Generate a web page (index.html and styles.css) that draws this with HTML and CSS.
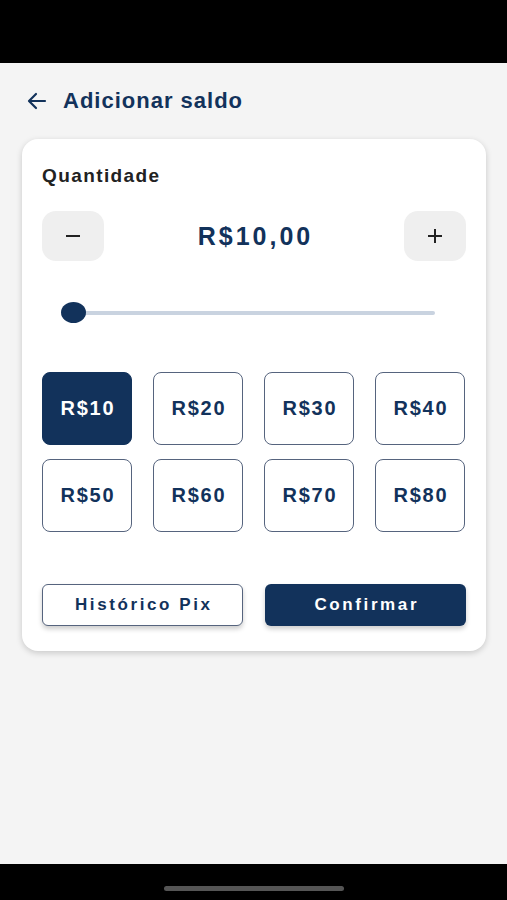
FILE: index.html
```html
<!DOCTYPE html>
<html>
<head>
<meta charset="utf-8">
<title>Adicionar saldo</title>
<link rel="stylesheet" href="styles.css">
</head>
<body>
<div class="status-bar"></div>

<div class="screen">
  <div class="header">
    <svg class="back" width="24" height="24" viewBox="0 0 24 24">
      <path d="M20 12H5M11 5l-7 7 7 7" fill="none" stroke="#12325b" stroke-width="2.2" stroke-linecap="round" stroke-linejoin="round"/>
    </svg>
    <h1>Adicionar saldo</h1>
  </div>

  <div class="card">
    <h2>Quantidade</h2>

    <div class="stepper">
      <button class="step">
        <svg width="20" height="20" viewBox="0 0 20 20"><path d="M3 10h14" stroke="#222" stroke-width="2"/></svg>
      </button>
      <div class="amount">R$10,00</div>
      <button class="step">
        <svg width="20" height="20" viewBox="0 0 20 20"><path d="M3 10h14M10 3v14" stroke="#222" stroke-width="2"/></svg>
      </button>
    </div>

    <div class="slider">
      <div class="track"></div>
      <div class="thumb"></div>
    </div>

    <div class="values">
      <button class="value selected">R$10</button>
      <button class="value">R$20</button>
      <button class="value">R$30</button>
      <button class="value">R$40</button>
      <button class="value">R$50</button>
      <button class="value">R$60</button>
      <button class="value">R$70</button>
      <button class="value">R$80</button>
    </div>

    <div class="actions">
      <button class="btn outline">Histórico Pix</button>
      <button class="btn solid">Confirmar</button>
    </div>
  </div>
</div>

<div class="nav-bar"><div class="pill"></div></div>
</body>
</html>
```

FILE: styles.css
```css
html, body {
   margin: 0;
   padding: 0;
}

body {
   width: 507px;
   height: 900px;
   background-color: #f4f4f4;
   font-family: "Liberation Sans", Arial, sans-serif;
   display: flex;
   flex-direction: column;
   overflow: hidden;
}

.status-bar {
   height: 63px;
   background-color: #000;
}

.screen {
   flex: 1;
   padding: 0 21px 0 22px;
}

.header {
   display: flex;
   align-items: center;
   height: 76px;
   padding-left: 3px;
}

.back {
   margin-right: 14px;
}

h1 {
   margin: 0;
   font-size: 22px;
   font-weight: 700;
   letter-spacing: 1px;
   color: #12325b;
}

.card {
   background-color: #fff;
   border-radius: 16px;
   box-shadow: 0 2px 6px rgba(0, 0, 0, 0.18);
   padding: 24px 20px 25px 20px;
}

h2 {
   margin: 0;
   font-size: 19px;
   font-weight: 700;
   letter-spacing: 1.4px;
   color: #222;
   line-height: 26px;
}

.stepper {
   display: flex;
   align-items: center;
   justify-content: space-between;
   margin-top: 22px;
}

.step {
   width: 62px;
   height: 50px;
   border: none;
   border-radius: 14px;
   background-color: #efefef;
   display: flex;
   align-items: center;
   justify-content: center;
   padding: 0;
}

.amount {
   font-size: 25px;
   font-weight: 700;
   letter-spacing: 3px;
   margin-right: -3px;
   color: #12325b;
}

.slider {
   position: relative;
   height: 22px;
   margin: 41px 31px 0 19px;
}

.track {
   position: absolute;
   left: 10px;
   right: 0;
   top: 9px;
   height: 4px;
   border-radius: 2px;
   background-color: #c9d3e0;
}

.thumb {
   position: absolute;
   left: 0;
   top: 0;
   width: 25px;
   height: 21px;
   border-radius: 50%;
   background-color: #12325b;
}

.values {
   display: grid;
   grid-template-columns: repeat(4, 90px);
   grid-auto-rows: 73px;
   column-gap: 21px;
   row-gap: 14px;
   margin-top: 48px;
}

.value {
   border: 1.5px solid #56647e;
   border-radius: 8px;
   background-color: #fff;
   font-family: "Liberation Sans", Arial, sans-serif;
   font-size: 20px;
   font-weight: 700;
   letter-spacing: 1.8px;
   text-indent: 1.8px;
   color: #12325b;
   padding: 0;
}

.value.selected {
   background-color: #12325b;
   border-color: #12325b;
   color: #fff;
}

.actions {
   display: flex;
   justify-content: space-between;
   margin-top: 52px;
}

.btn {
   width: 201px;
   height: 42px;
   border-radius: 6px;
   font-family: "Liberation Sans", Arial, sans-serif;
   font-size: 17px;
   font-weight: 700;
   letter-spacing: 2.6px;
   text-indent: 2.6px;
   box-shadow: 0 3px 5px rgba(0, 0, 0, 0.2);
   padding: 0;
}

.btn.outline {
   background-color: #fff;
   border: 1.5px solid #56647e;
   color: #12325b;
}

.btn.solid {
   background-color: #12325b;
   border: none;
   color: #fff;
}

.nav-bar {
   height: 36px;
   background-color: #000;
   display: flex;
   justify-content: center;
   padding-top: 22px;
   box-sizing: border-box;
}

.pill {
   width: 180px;
   height: 5px;
   border-radius: 3px;
   background-color: #555;
}
```
